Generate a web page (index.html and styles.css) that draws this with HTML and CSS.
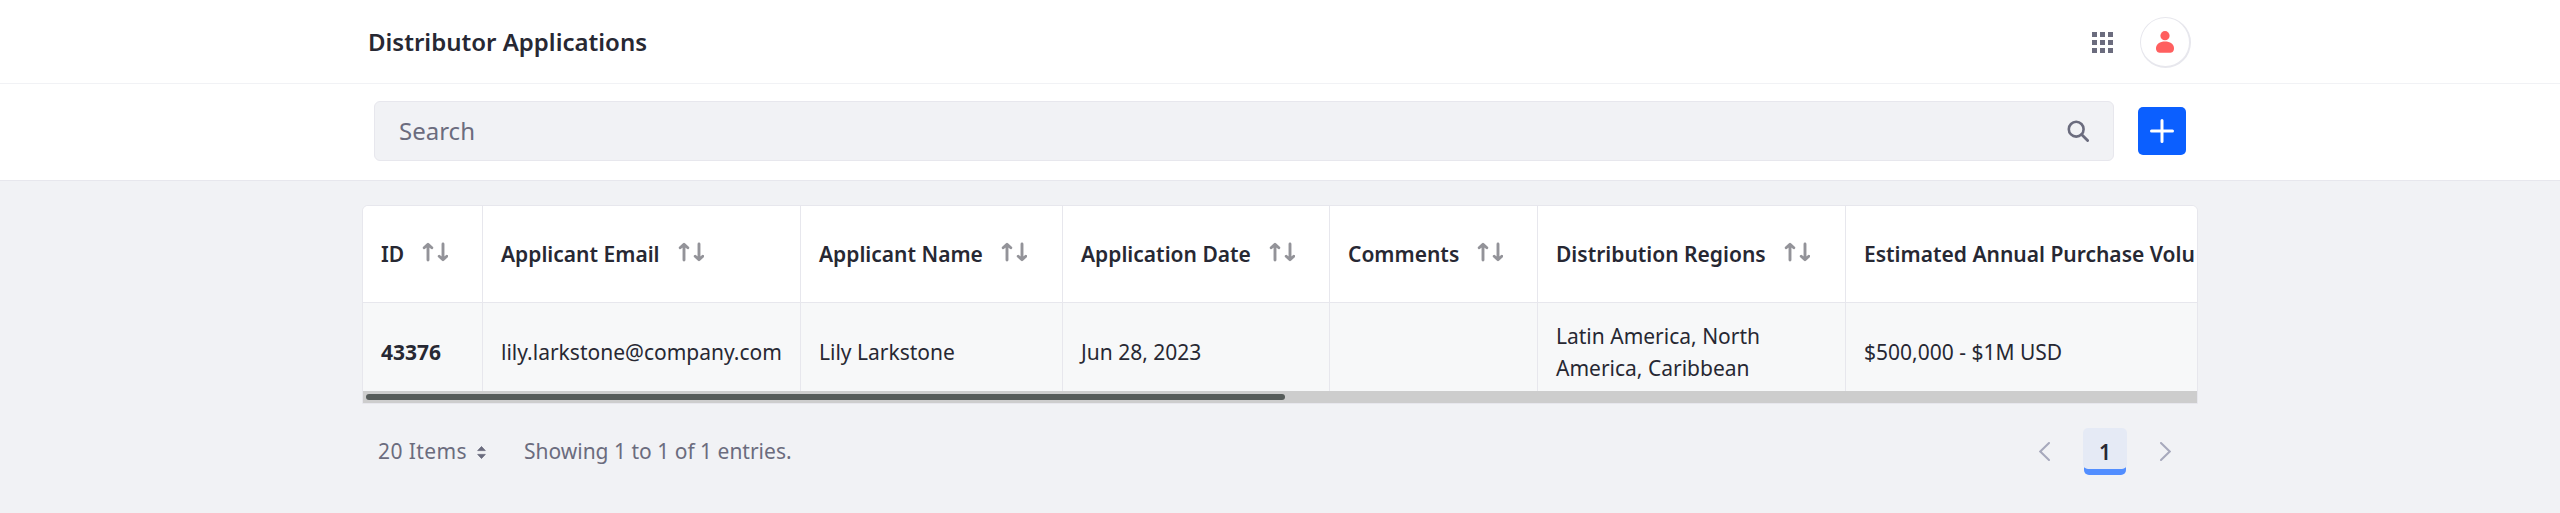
FILE: index.html
```html
<!DOCTYPE html>
<html lang="en">
<head>
<meta charset="utf-8">
<title>Distributor Applications</title>
<link rel="stylesheet" href="styles.css">
</head>
<body>
<svg class="defs" width="0" height="0">
  <symbol id="sort" viewBox="0 0 26 20">
    <path d="M6 18V3M2.200 5.800L6 2.300L9.800 5.800M21 2V17M17.200 14.200L21 17.700L24.800 14.200" fill="none" stroke="currentColor" stroke-width="2.900" stroke-linecap="round" stroke-linejoin="round"/>
  </symbol>
</svg>
<header class="topbar">
  <h1 class="title">Distributor Applications</h1>
  <svg class="apps" width="21" height="21" viewBox="0 0 21 21" fill="#6b6c7e"><path d="M0 0h5v5H0zM8 0h5v5H8zM16 0h5v5h-5zM0 8h5v5H0zM8 8h5v5H8zM16 8h5v5h-5zM0 16h5v5H0zM8 16h5v5H8zM16 16h5v5h-5z"/></svg>
  <span class="avatar"><svg width="18" height="22" viewBox="0 0 18 22" fill="#ff5f5f"><circle cx="9" cy="4.700" r="4.600"/><path d="M9 10.600c5 0 9 2.600 9 6.600 0 3.300-1.700 4.500-4.500 4.500h-9C1.700 21.700 0 20.500 0 17.200c0-4 4-6.600 9-6.600z"/></svg></span>
</header>
<div class="toolbar">
  <div class="search"><span>Search</span>
    <svg width="22" height="22" viewBox="0 0 22 22" fill="none" stroke="#6b6c7e" stroke-width="2.600"><circle cx="9.200" cy="9.200" r="7.400"/><path d="M14.600 14.600l6 6" stroke-linecap="round" stroke-width="2.800"/></svg>
  </div>
  <button class="add" aria-label="Add"><svg width="24" height="24" viewBox="0 0 24 24" stroke="#fff" stroke-width="3" stroke-linecap="round"><path d="M12 1.500v21M1.500 12h21"/></svg></button>
</div>
<main class="content">
  <div class="panel">
    <div class="grid head">
      <div class="cell">ID<svg class="sort"><use href="#sort"/></svg></div>
      <div class="cell">Applicant Email<svg class="sort"><use href="#sort"/></svg></div>
      <div class="cell">Applicant Name<svg class="sort"><use href="#sort"/></svg></div>
      <div class="cell">Application Date<svg class="sort"><use href="#sort"/></svg></div>
      <div class="cell">Comments<svg class="sort"><use href="#sort"/></svg></div>
      <div class="cell">Distribution Regions<svg class="sort"><use href="#sort"/></svg></div>
      <div class="cell last">Estimated Annual Purchase Volu</div>
    </div>
    <div class="grid row">
      <div class="cell id">43376</div>
      <div class="cell">lily.larkstone@company.com</div>
      <div class="cell">Lily Larkstone</div>
      <div class="cell">Jun 28, 2023</div>
      <div class="cell"></div>
      <div class="cell">Latin America, North<br>America, Caribbean</div>
      <div class="cell last">$500,000 - $1M USD</div>
    </div>
    <div class="track"><div class="thumb"></div></div>
  </div>
  <div class="footer">
    <span class="items">20 Items</span>
    <svg class="updown" width="9" height="13" viewBox="0 0 9 13" fill="#6b6c7e"><path d="M4.500 .5L8.300 4.600H.7zM4.500 12.500L8.300 8.400H.7z" stroke="#6b6c7e" stroke-width=".8" stroke-linejoin="round"/></svg>
    <span class="showing">Showing 1 to 1 of 1 entries.</span>
    <nav class="pager">
      <svg width="11" height="19" viewBox="0 0 11 19"><path d="M10 1L1.300 9.500L10 18"/></svg>
      <span class="page">1</span>
      <svg width="11" height="19" viewBox="0 0 11 19"><path d="M1 1L9.700 9.500L1 18"/></svg>
    </nav>
  </div>
</main>
</body>
</html>
```
FILE: styles.css
```css
* { box-sizing: border-box; }
html { background: #f1f2f5; }
body {
  margin: 0;
  color: #272833;
  font-family: "Noto Sans", sans-serif;
  font-size: 21px;
}
svg { flex: none; display: block; }
.defs { position: absolute; }
.topbar {
  height: 84px;
  padding: 0 369px 0 368px;
  display: flex;
  align-items: center;
  background: #fff;
  border-bottom: 1px solid #f1f2f5;
}
.title {
  margin: 0;
  flex: 1;
  font-size: 24px;
  font-weight: 600;
  line-height: 36px;
}
.apps { margin: 2px 27px 0 0; }
.avatar {
  width: 51px;
  height: 51px;
  margin-top: 2px;
  border: 1px solid #e7e7ed;
  border-right-width: 2px;
  border-bottom-width: 2px;
  border-radius: 50%;
  display: flex;
  align-items: center;
  justify-content: center;
}
.toolbar {
  height: 97px;
  padding: 17px 374px 0;
  display: flex;
  gap: 24px;
  background: #fff;
  border-bottom: 1px solid #e7e7ed;
}
.search {
  flex: 1;
  height: 60px;
  padding: 0 24px;
  display: flex;
  align-items: center;
  justify-content: space-between;
  background: #f1f2f5;
  border: 1px solid #e7e7ed;
  border-radius: 6px;
  color: #6b6c7e;
  font-size: 24px;
}
.search span { padding-bottom: 2px; }
.add {
  width: 48px;
  height: 48px;
  margin-top: 6px;
  padding: 0;
  display: flex;
  align-items: center;
  justify-content: center;
  background: #0b5fff;
  border: 0;
  border-radius: 5px;
}
.content { padding: 24px 362px 0; }
.panel {
  height: 199px;
  border: 1px solid #e7e7ed;
  border-radius: 6px 6px 0 0;
  overflow: hidden;
  background: #f7f8f9;
}
.grid {
  display: grid;
  grid-template-columns: 120px 318px 262px 267px 208px 308px 1fr;
}
.cell {
  min-width: 0;
  padding-left: 18px;
  display: flex;
  align-items: center;
  border-right: 1px solid #e7e7ed;
  white-space: nowrap;
  line-height: 32px;
}
.cell.last { border-right: 0; }
.head {
  height: 97px;
  background: #fff;
  border-bottom: 1px solid #e7e7ed;
  font-weight: 600;
}
.sort {
  width: 26px;
  height: 20px;
  margin: -4px 0 0 18px;
  color: #939399;
}
.row { height: 88px; }
.row .cell { padding-top: 10px; }
.id { font-weight: 700; }
.track { height: 12px; padding: 3px; background: #cdcdcd; }
.thumb { width: 919px; height: 6px; border-radius: 3px; background: #565c5a; }
.footer {
  height: 47px;
  margin-top: 24px;
  padding: 0 27px 0 16px;
  display: flex;
  align-items: center;
  color: #6b6c7e;
  line-height: 31px;
}
.items { letter-spacing: .4px; }
.updown { margin: 2px 0 0 10px; }
.showing { margin-left: 38px; }
.pager {
  margin-left: auto;
  display: flex;
  align-items: center;
  gap: 33px;
  isolation: isolate;
}
.pager svg { fill: none; stroke: #a7a9bc; stroke-width: 2; stroke-linecap: round; }
.page {
  position: relative;
  width: 44px;
  height: 41px;
  margin-bottom: 6px;
  padding-top: 7px;
  display: flex;
  align-items: center;
  justify-content: center;
  background: #e5eaf5;
  border-radius: 5px;
  color: #272833;
  font-weight: 600;
}
.page::after {
  content: "";
  position: absolute;
  z-index: -1;
  left: 1px;
  right: 1px;
  bottom: -6px;
  height: 10px;
  background: linear-gradient(#528eff, #528eff);
  border-radius: 0 0 5px 5px;
}
```
